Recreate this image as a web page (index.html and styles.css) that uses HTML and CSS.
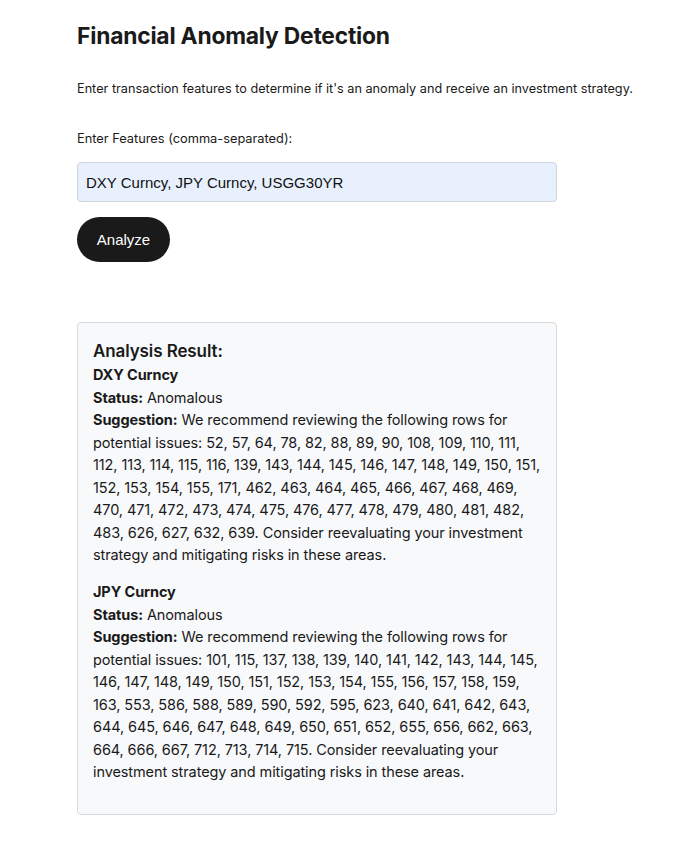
FILE: index.html
```html
<!DOCTYPE html>
<html>
<head>
<meta charset="utf-8">
<link rel="stylesheet" href="styles.css">
</head>
<body>
<main class="page">
  <h1 class="title">Financial Anomaly Detection</h1>
  <p class="intro">Enter transaction features to determine if it's an anomaly and receive an investment strategy.</p>
  <label class="label" for="features">Enter Features (comma-separated):</label>
  <input class="input" id="features" type="text" value="DXY Curncy, JPY Curncy, USGG30YR">
  <button class="btn">Analyze</button>
  <section class="result">
    <h3 class="result-title">Analysis Result:</h3>
    <div class="item">
      <div class="name">DXY Curncy</div>
      <div><b>Status:</b> Anomalous</div>
      <div><b>Suggestion:</b> We recommend reviewing the following rows for potential issues: 52, 57, 64, 78, 82, 88, 89, 90, 108, 109, 110, 111, 112, 113, 114, 115, 116, 139, 143, 144, 145, 146, 147, 148, 149, 150, 151, 152, 153, 154, 155, 171, 462, 463, 464, 465, 466, 467, 468, 469, 470, 471, 472, 473, 474, 475, 476, 477, 478, 479, 480, 481, 482, 483, 626, 627, 632, 639. Consider reevaluating your investment strategy and mitigating risks in these areas.</div>
    </div>
    <div class="item">
      <div class="name">JPY Curncy</div>
      <div><b>Status:</b> Anomalous</div>
      <div><b>Suggestion:</b> We recommend reviewing the following rows for potential issues: 101, 115, 137, 138, 139, 140, 141, 142, 143, 144, 145, 146, 147, 148, 149, 150, 151, 152, 153, 154, 155, 156, 157, 158, 159, 163, 553, 586, 588, 589, 590, 592, 595, 623, 640, 641, 642, 643, 644, 645, 646, 647, 648, 649, 650, 651, 652, 655, 656, 662, 663, 664, 666, 667, 712, 713, 714, 715. Consider reevaluating your investment strategy and mitigating risks in these areas.</div>
    </div>
  </section>
</main>
</body>
</html>
```
FILE: styles.css
```css
html, body { margin: 0; padding: 0; background: #fff; }
body { font-family: Inter, "Noto Sans", sans-serif; color: #1a1a1a; }
.page { padding: 22px 0 0 77px; width: 600px; display: flex; flex-direction: column; align-items: flex-start; }
.title { font-size: 22.8px; font-weight: 700; margin: 0; line-height: 28px; letter-spacing: -0.2px; }
.intro { font-size: 12.7px; margin: 30px 0 0; line-height: 18px; }
.label { font-size: 12.8px; margin-top: 32px; line-height: 18px; }
.input { box-sizing: border-box; width: 480px; height: 40px; margin-top: 14px; border: 1px solid #cfd4da; border-radius: 4px; background: #e8f0fe; font-family: "Liberation Sans", Arial, sans-serif; font-size: 15px; color: #111; padding: 0 8px; }
.btn { margin-top: 15px; width: 93px; height: 45px; border: none; border-radius: 23px; background: #1a1a1a; color: #fff; font-family: "Liberation Sans", Arial, sans-serif; font-size: 15px; }
.result { box-sizing: border-box; width: 480px; margin-top: 60px; background: #f8f9fa; border: 1px solid #d6d9dc; border-radius: 4px; padding: 15px 15px 16px; font-size: 14.5px; line-height: 22.5px; letter-spacing: -0.1px; }
.result-title { margin: 0; font-size: 17px; line-height: 26px; font-weight: 600; }
.name { font-weight: 700; }
.item { margin-bottom: 14.5px; }
b { font-weight: 700; }
```
